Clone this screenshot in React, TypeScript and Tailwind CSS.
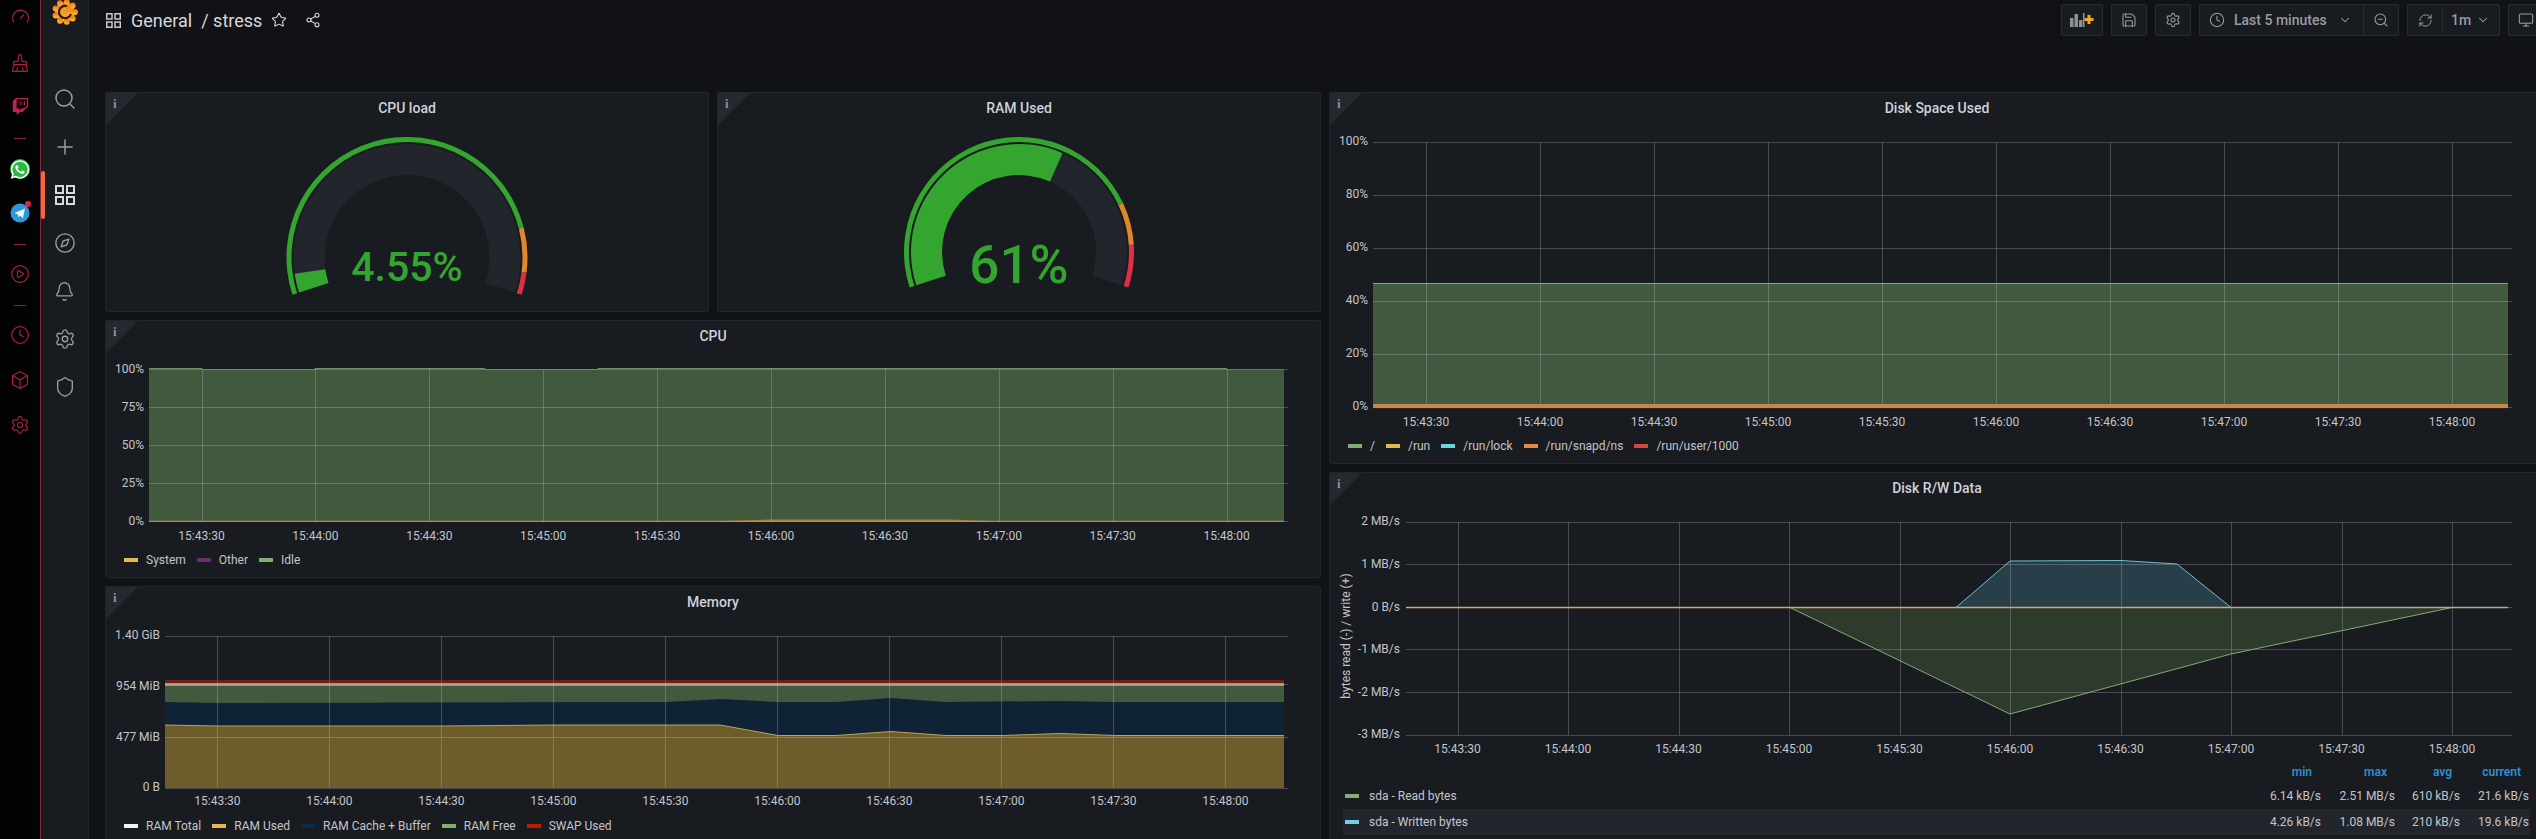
import type { ReactNode } from "react"
import {
  Bell,
  Box,
  BrushCleaning,
  ChevronDown,
  CirclePlay,
  Clock,
  Compass,
  Gauge,
  Monitor,
  Plus,
  RefreshCw,
  Save,
  Search,
  Settings,
  Share2,
  Shield,
  Star,
  ZoomOut,
} from "lucide-react"
import { FaTwitch, FaWhatsapp } from "react-icons/fa"

const LABEL = "#c3c5cc"
const GRID = "#ccccdc"

const TIMES = ["15:43:30", "15:44:00", "15:44:30", "15:45:00", "15:45:30", "15:46:00", "15:46:30", "15:47:00", "15:47:30", "15:48:00"]

function AppsIcon({ size, color }: { size: number; color: string }) {
  return (
    <svg width={size} height={size} viewBox="0 0 20 20" fill="none" stroke={color} strokeWidth="2">
      <rect x="1" y="1" width="7" height="7" />
      <rect x="12" y="1" width="7" height="7" />
      <rect x="1" y="12" width="7" height="7" />
      <rect x="12" y="12" width="7" height="7" />
    </svg>
  )
}

function GrafanaLogo() {
  const lobes = [0, 40, 80, 120, 160, 200, 240, 280, 320]
  return (
    <svg width="28" height="28" viewBox="-14 -14 28 28">
      <defs>
        <linearGradient id="grafana" x1="0" y1="1" x2="0" y2="0">
          <stop offset="0" stopColor="#fbc41c" />
          <stop offset="1" stopColor="#ee6a2a" />
        </linearGradient>
      </defs>
      <g fill="url(#grafana)">
        <circle r="10" />
        {lobes.map((a) => (
          <circle key={a} cx={10 * Math.cos((a * Math.PI) / 180)} cy={10 * Math.sin((a * Math.PI) / 180)} r="3" />
        ))}
      </g>
      <path d="M6 2 A6.2 6.2 0 1 1 2 -6" fill="none" stroke="#2a1d14" strokeWidth="2.2" />
      <path d="M3 1 A3 3 0 1 1 1 -3" fill="none" stroke="#f6a321" strokeWidth="2" />
    </svg>
  )
}

function Telegram() {
  return (
    <div className="relative h-[20px] w-[20px]">
      <svg width="20" height="20" viewBox="0 0 20 20">
        <circle cx="10" cy="10" r="9.5" fill="#2f96d8" />
        <path d="M4.5 10 L15 5.5 L13 15 L9.8 12.7 L8.2 14.2 L7.9 11.6 Z" fill="#e8f3fa" />
      </svg>
      <span className="absolute right-[-1px] top-[-2px] h-[6px] w-[6px] rounded-full bg-[#e5234b]" />
    </div>
  )
}

function AppStrip() {
  const icon = "text-[#ad2040]"
  const dash = "h-px w-[12px] bg-[#8c2238]"
  return (
    <div className="flex h-full w-[41px] shrink-0 flex-col items-center border-r border-[#8a2439] bg-[#030304]">
      <Gauge size={19} strokeWidth={1.4} className={`mt-[7px] ${icon}`} />
      <BrushCleaning size={20} strokeWidth={1.4} className={`mt-[27px] ${icon}`} />
      <FaTwitch size={17} className="mt-[25px] text-[#c2234c]" />
      <div className={`mt-[23px] ${dash}`} />
      <div className="mt-[20px] flex h-[20px] w-[20px] items-center justify-center rounded-full bg-[#2cb742]">
        <FaWhatsapp size={21} className="text-white" />
      </div>
      <div className="mt-[24px]">
        <Telegram />
      </div>
      <div className={`mt-[21px] ${dash}`} />
      <CirclePlay size={20} strokeWidth={1.4} className={`mt-[19px] ${icon}`} />
      <div className={`mt-[21px] ${dash}`} />
      <Clock size={20} strokeWidth={1.4} className={`mt-[19px] ${icon}`} />
      <Box size={20} strokeWidth={1.4} className={`mt-[25px] ${icon}`} />
      <Settings size={20} strokeWidth={1.4} className={`mt-[25px] ${icon}`} />
    </div>
  )
}

function SideItem({ children, active }: { children: ReactNode; active?: boolean }) {
  return (
    <div className="relative flex h-[48px] w-full items-center justify-center text-[#9a9ca3]">
      {active && <span className="absolute left-0 top-0 h-[48px] w-[4px] rounded-[2px] bg-[#f2683c]" />}
      {children}
    </div>
  )
}

function SideMenu() {
  return (
    <div className="flex h-full w-[48px] shrink-0 flex-col border-r border-[#22252b] bg-[#181b1f]">
      <div className="flex h-[75px] justify-center overflow-hidden">
        <div className="-mt-[2px]">
          <GrafanaLogo />
        </div>
      </div>
      <SideItem>
        <Search size={24} strokeWidth={1.5} />
      </SideItem>
      <SideItem>
        <Plus size={24} strokeWidth={1.5} />
      </SideItem>
      <SideItem active>
        <AppsIcon size={20} color="#d8d9da" />
      </SideItem>
      <SideItem>
        <Compass size={22} strokeWidth={1.5} />
      </SideItem>
      <SideItem>
        <Bell size={21} strokeWidth={1.5} />
      </SideItem>
      <SideItem>
        <Settings size={22} strokeWidth={1.5} />
      </SideItem>
      <SideItem>
        <Shield size={22} strokeWidth={1.5} />
      </SideItem>
    </div>
  )
}

function ToolButton({ className, children }: { className: string; children: ReactNode }) {
  return (
    <div className={`flex h-[32px] items-center justify-center border border-[#2a2c32] bg-[#181b1f] text-[#9a9ca3] ${className}`}>
      {children}
    </div>
  )
}

function TopBar() {
  return (
    <div className="flex h-[92px] shrink-0 items-start justify-between pl-[17px]">
      <div className="flex h-[40px] items-center text-[18px] text-[#d8d9da]">
        <AppsIcon size={15} color="#c9cad0" />
        <span className="ml-[10px]">General</span>
        <span className="ml-[9px]">/ stress</span>
        <Star size={16} strokeWidth={1.6} className="ml-[9px]" />
        <Share2 size={16} strokeWidth={1.6} className="ml-[18px]" />
      </div>
      <div className="-mr-[8px] mt-[4px] flex gap-[8px]">
        <ToolButton className="w-[42px] rounded-[2px]">
          <svg width="24" height="16" viewBox="0 0 24 16">
            <g fill="#8e9097">
              <rect x="0" y="6" width="3.5" height="9" />
              <rect x="4.5" y="2" width="3.5" height="13" />
              <rect x="9" y="8" width="3.5" height="7" />
              <rect x="13" y="1" width="1.5" height="14" />
            </g>
            <path d="M17.5 3 h3 v3 h3 v3 h-3 v3 h-3 v-3 h-3 v-3 h3 z" fill="#f5a623" />
          </svg>
        </ToolButton>
        <ToolButton className="w-[36px] rounded-[2px]">
          <Save size={16} strokeWidth={1.6} />
        </ToolButton>
        <ToolButton className="w-[36px] rounded-[2px]">
          <Settings size={16} strokeWidth={1.6} />
        </ToolButton>
        <div className="flex">
          <ToolButton className="w-[165px] justify-start rounded-l-[2px] pl-[9px]">
            <Clock size={16} strokeWidth={1.6} />
            <span className="ml-[9px] text-[14px] font-medium">Last 5 minutes</span>
            <ChevronDown size={14} strokeWidth={1.8} className="ml-[11px]" />
          </ToolButton>
          <ToolButton className="-ml-px w-[36px] rounded-r-[2px]">
            <ZoomOut size={16} strokeWidth={1.6} />
          </ToolButton>
        </div>
        <div className="flex">
          <ToolButton className="w-[36px] rounded-l-[2px]">
            <RefreshCw size={15} strokeWidth={1.6} />
          </ToolButton>
          <ToolButton className="-ml-px w-[58px] justify-start rounded-r-[2px] pl-[8px]">
            <span className="text-[14px] font-medium">1m</span>
            <ChevronDown size={14} strokeWidth={1.8} className="ml-[5px]" />
          </ToolButton>
        </div>
        <ToolButton className="w-[36px] rounded-l-[2px]">
          <Monitor size={16} strokeWidth={1.6} />
        </ToolButton>
      </div>
    </div>
  )
}

function Panel({ title, className, children }: { title: string; className: string; children: ReactNode }) {
  return (
    <div className={`relative shrink-0 overflow-hidden rounded-[2px] border border-[#22252b] bg-[#181b1f] ${className}`}>
      <div className="absolute left-0 top-0 h-[32px] w-[32px] bg-[#25282e] [clip-path:polygon(0_0,100%_0,0_100%)]" />
      <span className="absolute left-[7px] top-[1px] text-[13px] font-bold text-[#8e9097] [font-family:'Liberation_Serif',serif]">i</span>
      <div className="h-[30px] text-center text-[14px] font-medium leading-[30px] text-[#d0d1dc]">{title}</div>
      {children}
    </div>
  )
}

function GaugeChart({ cx, cy, outer, inner, band, value, marks, text, fontSize, textY }: {
  cx: number
  cy: number
  outer: number
  inner: number
  band: number
  value: number
  marks: [number, number]
  text: string
  fontSize: number
  textY: number
}) {
  const sector = (r1: number, r2: number, from: number, to: number) => {
    const a1 = ((198 - from * 216) * Math.PI) / 180
    const a2 = ((198 - to * 216) * Math.PI) / 180
    const large = (to - from) * 216 > 180 ? 1 : 0
    const pt = (r: number, a: number) => `${(cx + r * Math.cos(a)).toFixed(2)} ${(cy - r * Math.sin(a)).toFixed(2)}`
    return `M${pt(r1, a1)} A${r1} ${r1} 0 ${large} 1 ${pt(r1, a2)} L${pt(r2, a2)} A${r2} ${r2} 0 ${large} 0 ${pt(r2, a1)} Z`
  }
  const green = "#34a62f"
  const trackOuter = outer - 7
  return (
    <>
      <path d={sector(trackOuter, inner, 0, 1)} fill="#22252b" />
      <path d={sector(trackOuter, inner, 0, value)} fill={green} />
      <path d={sector(outer, outer - band, 0, marks[0])} fill={green} />
      <path d={sector(outer, outer - band, marks[0], marks[1])} fill="#e0862b" />
      <path d={sector(outer, outer - band, marks[1], 1)} fill="#e02f44" />
      <text x={cx} y={textY} textAnchor="middle" dominantBaseline="central" fontSize={fontSize} fontWeight="500" fill={green}>
        {text}
      </text>
    </>
  )
}

interface Area {
  points: [number, number][]
  fill: string
  base: number
  line?: string
  linePoints?: [number, number][]
}

interface ChartProps {
  box: [number, number, number, number]
  left: number
  right: number
  top: number
  bottom: number
  firstX: number
  stepX: number
  labelY: number
  yLabels: { text: string; y: number; line: number }[]
  labelRight: number
  under: Area[]
  over?: ReactNode
}

function TimeChart({ box, left, right, top, bottom, firstX, stepX, labelY, yLabels, labelRight, under, over }: ChartProps) {
  return (
    <svg className="block" width={box[2]} height={box[3]} viewBox={box.join(" ")}>
      {under.map((a, i) => (
        <polygon
          key={i}
          fill={a.fill}
          points={`${a.points[0][0]},${a.base} ${a.points.map((p) => p.join(",")).join(" ")} ${a.points[a.points.length - 1][0]},${a.base}`}
        />
      ))}
      <g stroke={GRID} strokeOpacity="0.27" strokeWidth="1">
        {yLabels.map((l) => (
          <line key={l.text} x1={left} x2={right} y1={l.line} y2={l.line} />
        ))}
        {TIMES.map((t, i) => {
          const x = Math.round(firstX + stepX * i) + 0.5
          return <line key={t} x1={x} x2={x} y1={top} y2={bottom} />
        })}
      </g>
      {under.map(
        (a, i) =>
          a.line && (
            <polyline key={i} fill="none" stroke={a.line} strokeWidth="1" points={(a.linePoints ?? a.points).map((p) => p.join(",")).join(" ")} />
          ),
      )}
      {over}
      <g fontSize="12" fill={LABEL}>
        {yLabels.map((l) => (
          <text key={l.text} x={labelRight} y={l.y} textAnchor="end" dominantBaseline="central">
            {l.text}
          </text>
        ))}
        {TIMES.map((t, i) => (
          <text key={t} x={firstX + stepX * i} y={labelY} textAnchor="middle" dominantBaseline="central">
            {t}
          </text>
        ))}
      </g>
    </svg>
  )
}

function Legend({ items }: { items: [string, string][] }) {
  return (
    <div className="flex h-[24px] items-center gap-[11px] pl-[18px] text-[12px] text-[#c3c5cc]">
      {items.map(([label, color]) => (
        <div key={label} className="flex items-center gap-[8px]">
          <span className="h-[4px] w-[14px]" style={{ backgroundColor: color }} />
          <span>{label}</span>
        </div>
      ))}
    </div>
  )
}

function StatRow({ label, color, values, shaded }: { label: string; color: string; values: string[]; shaded?: boolean }) {
  return (
    <div className={`flex h-[26px] items-center text-[12px] text-[#c3c5cc] ${shaded ? "bg-[#22252b]" : ""}`}>
      <span className="ml-[2px] h-[4px] w-[14px]" style={{ backgroundColor: color }} />
      <span className="ml-[10px] flex-1">{label}</span>
      <span className="w-[74px] text-right">{values[0]}</span>
      <span className="w-[74px] text-right">{values[1]}</span>
      <span className="w-[65px] text-right">{values[2]}</span>
      <span className="w-[70px] pr-[1px] text-right">{values[3]}</span>
    </div>
  )
}

export default function App() {
  return (
    <div className="flex h-[839px] w-[2536px] overflow-hidden bg-[#111217] [font-family:Roboto,'Liberation_Sans',sans-serif]">
      <AppStrip />
      <SideMenu />
      <div className="flex min-w-0 flex-1 flex-col">
        <TopBar />
        <div className="flex gap-[8px] pl-[16px]">
          <div className="flex w-[1216px] shrink-0 flex-col gap-[8px]">
            <div className="flex gap-[8px]">
              <Panel title="CPU load" className="h-[220px] w-[604px]">
                <svg className="block" width="602" height="188" viewBox="106 123 602 188">
                  <GaugeChart cx={407} cy={257.5} outer={120.5} inner={82.5} band={5} value={0.0455} marks={[0.85, 0.95]} text="4.55%" fontSize={41} textY={267} />
                </svg>
              </Panel>
              <Panel title="RAM Used" className="h-[220px] w-[604px]">
                <svg className="block" width="602" height="188" viewBox="718 123 602 188">
                  <GaugeChart cx={1019} cy={252} outer={115} inner={77} band={5} value={0.61} marks={[0.8, 0.9]} text="61%" fontSize={53} textY={264.5} />
                </svg>
              </Panel>
            </div>
            <Panel title="CPU" className="h-[258px]">
              <TimeChart
                box={[106, 351, 1214, 197]}
                left={149}
                right={1288}
                top={369}
                bottom={522}
                firstX={201.5}
                stepX={113.9}
                labelY={535.5}
                labelRight={144}
                yLabels={[
                  { text: "100%", y: 368.5, line: 369.5 },
                  { text: "75%", y: 407, line: 407.5 },
                  { text: "50%", y: 445, line: 445.5 },
                  { text: "25%", y: 483, line: 483.5 },
                  { text: "0%", y: 520.5, line: 521.5 },
                ]}
                under={[
                  {
                    base: 522,
                    fill: "#415a3e",
                    line: "#6f8f65",
                    points: [[149, 369], [1284, 369]],
                    linePoints: [[149, 368.5], [202, 368.5], [202, 369.5], [315, 369.5], [315, 368.5], [485, 368.5], [485, 369.5], [598, 369.5], [598, 368.5], [1227, 368.5]],
                  },
                  { base: 522, fill: "#8a6f52", points: [[149, 520.5], [1284, 520.5]] },
                  { base: 522, fill: "#b27a3a", points: [[720, 521], [770, 519.5], [950, 519.5], [990, 521]] },
                ]}
              />
              <Legend items={[["System", "#e5b94f"], ["Other", "#6b2f6b"], ["Idle", "#7fb06f"]]} />
            </Panel>
            <Panel title="Memory" className="h-[260px]">
              <TimeChart
                box={[106, 617, 1214, 197]}
                left={165}
                right={1288}
                top={636}
                bottom={788}
                firstX={217.4}
                stepX={112}
                labelY={801}
                labelRight={160}
                yLabels={[
                  { text: "1.40 GiB", y: 634.5, line: 636.5 },
                  { text: "954 MiB", y: 685.5, line: 684.5 },
                  { text: "477 MiB", y: 736.5, line: 737.5 },
                  { text: "0 B", y: 786.5, line: 788.5 },
                ]}
                under={[
                  { base: 788, fill: "#6e2016", points: [[165, 680], [1284, 680]] },
                  { base: 788, fill: "#a39a6a", points: [[165, 683], [1284, 683]] },
                  { base: 788, fill: "#415a3e", points: [[165, 686], [1284, 686]] },
                  {
                    base: 788,
                    fill: "#102336",
                    points: [[165, 702], [217, 703], [666, 702], [722, 699], [778, 702], [836, 702], [891, 698], [946, 702], [1060, 701], [1115, 702], [1284, 702]],
                  },
                  {
                    base: 788,
                    fill: "#6f5c2b",
                    line: "#b8a45c",
                    points: [[165, 725], [217, 726], [441, 726], [554, 725], [720, 725], [778, 735.5], [836, 735.5], [891, 731.5], [946, 735.5], [1003, 735.5], [1060, 733.5], [1115, 735.5], [1284, 735.5]],
                  },
                ]}
              />
              <Legend
                items={[
                  ["RAM Total", "#eaf7e4"],
                  ["RAM Used", "#e5b94f"],
                  ["RAM Cache + Buffer", "#0a2c48"],
                  ["RAM Free", "#7fb06f"],
                  ["SWAP Used", "#bf1b00"],
                ]}
              />
            </Panel>
          </div>
          <div className="flex w-[1216px] shrink-0 flex-col gap-[8px]">
            <Panel title="Disk Space Used" className="h-[372px]">
              <TimeChart
                box={[1330, 123, 1214, 311]}
                left={1373}
                right={2512}
                top={142}
                bottom={408}
                firstX={1426}
                stepX={114}
                labelY={421.5}
                labelRight={1368}
                yLabels={[
                  { text: "100%", y: 140.5, line: 142.5 },
                  { text: "80%", y: 194, line: 195.5 },
                  { text: "60%", y: 247, line: 248.5 },
                  { text: "40%", y: 300, line: 301.5 },
                  { text: "20%", y: 353, line: 354.5 },
                  { text: "0%", y: 406, line: 407.5 },
                ]}
                under={[
                  { base: 408, fill: "#415a3e", line: "#85a97a", points: [[1373, 283.5], [2508, 283.5]] },
                ]}
                over={
                  <>
                    <rect x="1373" y="404" width="1135" height="4" fill="#c48a4c" />
                    <rect x="1373" y="408" width="1135" height="1" fill="#3a1f1c" />
                  </>
                }
              />
              <Legend
                items={[
                  ["/", "#7fb06f"],
                  ["/run", "#e5b94f"],
                  ["/run/lock", "#6ed0e0"],
                  ["/run/snapd/ns", "#e58a45"],
                  ["/run/user/1000", "#d0483f"],
                ]}
              />
            </Panel>
            <Panel title="Disk R/W Data" className="h-[372px]">
              <TimeChart
                box={[1330, 503, 1214, 258]}
                left={1406}
                right={2512}
                top={522}
                bottom={735}
                firstX={1457.5}
                stepX={110.5}
                labelY={749}
                labelRight={1400}
                yLabels={[
                  { text: "2 MB/s", y: 520.5, line: 522.5 },
                  { text: "1 MB/s", y: 563.5, line: 564.5 },
                  { text: "0 B/s", y: 606.5, line: 607.5 },
                  { text: "-1 MB/s", y: 648.5, line: 649.5 },
                  { text: "-2 MB/s", y: 691.5, line: 692.5 },
                  { text: "-3 MB/s", y: 734, line: 735.5 },
                ]}
                under={[
                  { base: 607.5, fill: "#283f49", line: "#6dc1d0", points: [[1956, 607.5], [2010, 561], [2121, 560.5], [2177, 564], [2231, 607.5]] },
                  { base: 607.5, fill: "#2e3b2c", line: "#86a976", points: [[1790, 607.5], [2010, 714], [2231, 654], [2452, 607.5]] },
                ]}
                over={
                  <>
                    <line x1="1406" x2="2231" y1="607.5" y2="607.5" stroke="#d8a56c" strokeWidth="1.5" />
                    <line x1="2231" x2="2508" y1="607.5" y2="607.5" stroke="#b8a98c" strokeWidth="1.5" />
                    <text x="1346" y="636" transform="rotate(-90 1346 636)" fontSize="12" fill={LABEL} textAnchor="middle" dominantBaseline="central">
                      bytes read (-) / write (+)
                    </text>
                  </>
                }
              />
              <div className="ml-[13px] w-[1187px]">
                <div className="flex h-[22px] items-center text-[12px] font-semibold text-[#2f8fd6]">
                  <span className="flex-1" />
                  <span className="w-[74px] pr-[9px] text-right">min</span>
                  <span className="w-[74px] pr-[8px] text-right">max</span>
                  <span className="w-[65px] pr-[8px] text-right">avg</span>
                  <span className="w-[70px] pr-[9px] text-right">current</span>
                </div>
                <StatRow label="sda - Read bytes" color="#7fb06f" values={["6.14 kB/s", "2.51 MB/s", "610 kB/s", "21.6 kB/s"]} />
                <StatRow label="sda - Written bytes" color="#6ed0e0" values={["4.26 kB/s", "1.08 MB/s", "210 kB/s", "19.6 kB/s"]} shaded />
              </div>
            </Panel>
          </div>
        </div>
      </div>
    </div>
  )
}
